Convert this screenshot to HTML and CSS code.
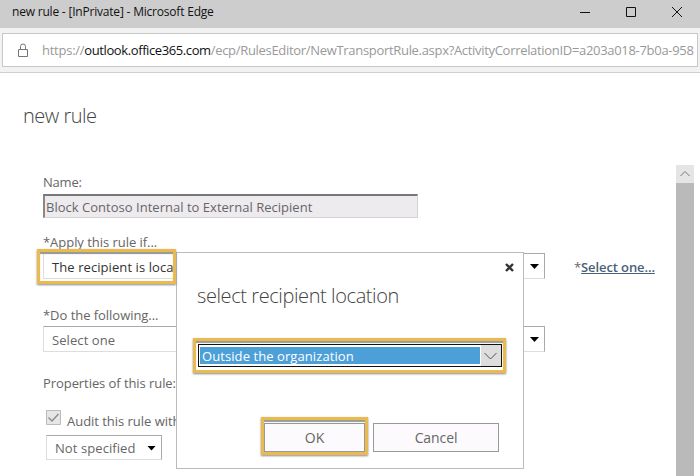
FILE: index.html
```html
<!DOCTYPE html>
<html lang="en">
<head>
<meta charset="utf-8">
<title>new rule</title>
<link rel="stylesheet" href="styles.css">
</head>
<body>
<header class="titlebar">
  <span class="window-title">new rule - [InPrivate] - Microsoft Edge</span>
  <svg class="window-controls" width="104" height="14" viewBox="0 0 104 14" fill="none" stroke="#111">
    <path d="M1 7.5h10" /><path d="M47.5 2.5h9v9h-9z" /><path d="M93 2l10 10M103 2l-10 10" />
  </svg>
</header>
<div class="toolbar">
  <div class="address">
    <svg class="lock" width="12" height="15" viewBox="0 0 12 15" fill="none" stroke="#777"><path d="M1.5 6.5h9v7h-9zM3.5 6.5v-3q0-2.500 2.500-2.500t2.500 2.500v3" /></svg>
    <span class="url"><span class="scheme">https://</span><b>outlook.office365.com</b><span class="path">/ecp/RulesEditor/NewTransportRule.aspx?ActivityCorrelationID=a203a018-7b0a-958</span></span>
  </div>
</div>
<main class="page">
  <h1>new rule</h1>
  <div class="body">
    <form class="form">
      <label class="name-label">Name:</label>
      <div class="name-field"><span>Block Contoso Internal to External Recipient</span></div>
      <label class="apply-label">*Apply this rule if...</label>
      <div class="row">
        <div class="select"><span class="recipient">The recipient is located...</span><i class="arrow"></i></div>
        <span class="link-wrap">*<a class="link">Select one...</a></span>
      </div>
      <label class="do-label">*Do the following...</label>
      <div class="select"><span class="select-one">Select one</span><i class="arrow"></i></div>
      <div class="properties">Properties of this rule:</div>
      <div class="check-row">
        <svg class="check" width="15" height="15" viewBox="0 0 15 15" fill="none"><path d="M.5.5h14v14H.5z" fill="#e6e6e6" stroke="#bbb"/><path d="M2.500 7.500l3.500 3.500 6.500-7" stroke="#888" stroke-width="1.300"/></svg>
        <span class="audit">Audit this rule with severity level:</span>
      </div>
      <div class="select small"><span class="unspecified">Not specified</span><i class="arrow"></i></div>
    </form>
    <div class="scrollbar"><svg width="18" height="18" viewBox="0 0 18 18" fill="none" stroke="#777"><path d="M4.500 11L9 6.500l4.500 4.500" /></svg></div>
  </div>
</main>
<section class="dialog">
  <svg class="close" width="9" height="9" viewBox="0 0 9 9" stroke="#333" stroke-width="2.400"><path d="M1 1l7 7M8 1L1 8" /></svg>
  <h2>select recipient location</h2>
  <div class="highlight location">
    <div class="combo"><div class="value"><span>Outside the organization</span></div><div class="drop"><svg width="19" height="19" viewBox="0 0 19 19" fill="none" stroke="#555"><path d="M3.500 8l6 6 6-6" /></svg></div></div>
  </div>
  <div class="actions">
    <div class="highlight ok"><div class="button">OK</div></div>
    <div class="button cancel">Cancel</div>
  </div>
</section>
<div class="highlight recipient-mark"></div>
</body>
</html>
```
FILE: styles.css
```css
* { box-sizing: border-box; }
body { margin: 0; width: 700px; height: 476px; overflow: hidden; position: relative; background: #fff; color: #666; font: 13px/18px "Open Sans", "Noto Sans", sans-serif; white-space: nowrap; }
.titlebar { height: 28px; background: #cdcdcd; display: flex; justify-content: space-between; align-items: center; padding: 0 17px 4px 12px; color: #111; }
.window-title { font-size: 12px; letter-spacing: -.2px; }
.toolbar { height: 45px; background: #f2f2f2; border-bottom: 1px solid #cfcfcf; padding: 5px 2px; }
.address { height: 34px; border: 1px solid #c8c8c8; background: #fff; display: flex; align-items: center; padding: 0 0 0 14px; }
.lock { flex: none; margin-right: 13px; }
.url { color: #999; font-size: 13px; letter-spacing: -.25px; }
.url b { color: #111; font-weight: 400; letter-spacing: -.4px; }
.path { letter-spacing: -.31px; }
.page { height: 403px; overflow: hidden; }
h1, h2 { margin: 0; font-weight: 300; font-size: 20px; line-height: 28px; color: #444; }
h1 { padding: 29px 0 0 23px; height: 92px; letter-spacing: -.5px; }
.body { display: flex; justify-content: space-between; height: 311px; padding-right: 6px; }
.form { width: 633px; padding: 8px 0 0 43px; }
.form label { display: block; height: 18px; letter-spacing: -.04px; }
.form .name-label { letter-spacing: -.2px; }
.name-field { width: 375px; height: 24px; margin-top: 3px; background: #eeebef; border: 1px solid #d4d2d4; border-top: 2px solid #777; border-left: 2px solid #888; padding: 2px 0 0 1px; letter-spacing: .02px; }
.form .apply-label { margin-top: 15px; height: 20px; }
.row { display: flex; align-items: flex-start; }
.select { flex: none; width: 502px; height: 26px; border: 1px solid #aaa; border-left-color: #ddd; border-bottom-color: #ddd; padding: 1px 5px 0 8px; display: flex; align-items: center; justify-content: space-between; letter-spacing: .08px; }
.recipient { color: #333; }
.arrow { width: 9px; height: 5px; background: #000; clip-path: polygon(0 0, 100% 0, 50% 100%); }
.link-wrap { margin: 5px 0 0 29px; letter-spacing: -.1px; }
.link { color: #47617a; font-weight: 600; text-decoration: underline; }
.form .do-label { margin-top: 27px; height: 20px; }
.properties { margin-top: 22px; height: 19px; letter-spacing: -.07px; }
.check-row { display: flex; height: 42px; padding: 17px 0 0 3px; letter-spacing: -.03px; }
.audit { margin: 2px 0 0 6px; }
.small { width: 116px; height: 25px; margin-left: 3px; }
.scrollbar { width: 18px; background: linear-gradient(#e5e5e5 18px, #bababa 18px); }
.dialog { position: absolute; left: 176px; top: 252px; width: 348px; height: 217px; background: #fff; border: 1px solid #bbb; }
.close { display: block; margin: 10px 9px 0 auto; }
h2 { margin: 10px 0 28px 20px; letter-spacing: -.41px; }
.highlight { border: 3px solid #e9ba4d; box-shadow: 0 1px 2px #888, inset 0 2px 1px #999; }
.location { width: 313px; height: 35px; margin-left: 16px; padding: 3px 1px 3px 2px; }
.combo { height: 23px; border: 1px solid #111; padding: 2px 0 2px 1px; display: flex; background: #fff; }
.value { flex: 1; background: #4d9fd8; color: #fff; padding-left: 2px; letter-spacing: .08px; line-height: 18px; }
.drop { width: 20px; background: #ddd; margin: -2px 0 -2px 1px; }
.actions { display: flex; margin: 44px 0 0 84px; gap: 5px; }
.ok { width: 107px; height: 38px; padding: 3px 0 0; }
.button { height: 29px; border: 1px solid #999; background: #fcfafd; text-align: center; font-size: 14px; line-height: 27px; letter-spacing: -.1px; }
.cancel { width: 126px; margin-top: 6px; }
.recipient-mark { position: absolute; left: 37px; top: 249px; width: 139px; height: 35px; }
```
